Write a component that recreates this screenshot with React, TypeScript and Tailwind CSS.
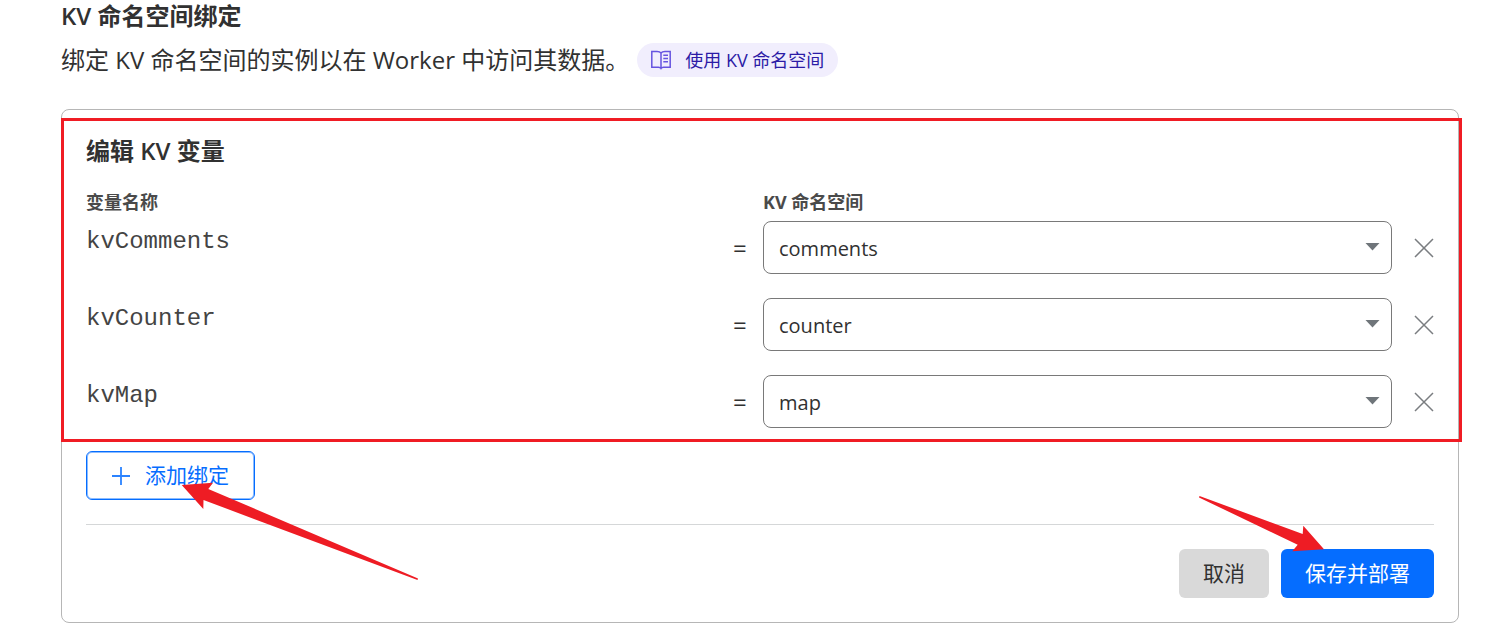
import { useState } from 'react'

const NAMESPACES = ['comments', 'counter', 'map']

const INITIAL_BINDINGS = [
    { name: 'kvComments', namespace: 'comments' },
    { name: 'kvCounter', namespace: 'counter' },
    { name: 'kvMap', namespace: 'map' },
]

function BookIcon() {
    return (
        <svg width="20" height="20" viewBox="0 0 20 20" fill="none" stroke="#6654e0" strokeWidth="1.5" aria-hidden="true">
            <path d="M10 3C9 1.700 7.500 1.500 6 1.500H.8v15.700H7.500c1.200 0 2 .3 2.500 1.200.5-.9 1.300-1.200 2.500-1.200h6.700V1.500H14c-1.500 0-3 .2-4 1.500v15" />
            <path d="M12.300 5.300H17M12.300 8.500H17M12.300 11.700H17" />
        </svg>
    )
}

function CloseIcon() {
    return (
        <svg width="20" height="20" viewBox="0 0 20 20" stroke="#7a7d80" strokeWidth="1.5" aria-hidden="true">
            <path d="M1 1l18 18M19 1L1 19" />
        </svg>
    )
}

function PlusIcon() {
    return (
        <svg width="18" height="18" viewBox="0 0 18 18" stroke="#2b83ff" strokeWidth="1.8" aria-hidden="true">
            <path d="M9 0v18M0 9h18" />
        </svg>
    )
}

export default function App() {
    const [bindings, setBindings] = useState(INITIAL_BINDINGS)

    const updateNamespace = (index: number, namespace: string) => {
        setBindings(bindings.map((b, i) => (i === index ? { ...b, namespace } : b)))
    }

    const removeBinding = (index: number) => {
        setBindings(bindings.filter((_, i) => i !== index))
    }

    const addBinding = () => {
        setBindings([...bindings, { name: 'kv' + (bindings.length + 1), namespace: NAMESPACES[0] }])
    }

    return (
        <main className="bg-white pl-[61px] pr-8 pb-1.5 text-[#313131] font-['Open_Sans','Noto_Sans_CJK_SC',sans-serif]">
            <h2 className="text-2xl leading-8 font-semibold">KV 命名空间绑定</h2>
            <div className="mt-[11px] flex items-center gap-2">
                <p className="text-2xl leading-[34px]">绑定 KV 命名空间的实例以在 Worker 中访问其数据。</p>
                <a href="#docs" className="flex h-[34px] items-center gap-3.5 rounded-full bg-[#f1eefd] px-3.5 text-lg text-[#2c1ba6]">
                    <BookIcon />
                    使用 KV 命名空间
                </a>
            </div>

            <form onSubmit={(e) => e.preventDefault()} className="mt-8 rounded-lg border border-[#b6b6b6] pt-2 pb-6">
                <div className="-ml-px -mr-1 border-[3px] border-[#f01c24] pt-3 pr-[25px] pb-[11px] pl-[22px]">
                    <h3 className="text-2xl leading-9 font-semibold">编辑 KV 变量</h3>
                    <div className="mt-5 mb-1.5 grid grid-cols-[1fr_12px_1fr_24px] gap-x-[18px] text-lg leading-[26px] font-bold text-[#4a4a4a]">
                        <span>变量名称</span>
                        <span className="col-start-3">KV 命名空间</span>
                    </div>
                    <div className="flex flex-col gap-6">
                        {bindings.map((binding, index) => (
                            <div key={binding.name} className="grid grid-cols-[1fr_12px_1fr_24px] items-center gap-x-[18px]">
                                <label
                                    htmlFor={binding.name}
                                    className="self-start text-2xl leading-[42px] text-[#444444] font-['Liberation_Mono',monospace]"
                                >
                                    {binding.name}
                                </label>
                                <span className="text-2xl leading-8">=</span>
                                <div className="relative">
                                    <select
                                        id={binding.name}
                                        value={binding.namespace}
                                        onChange={(e) => updateNamespace(index, e.target.value)}
                                        className="block h-[53px] w-full appearance-none rounded-lg border border-[#797979] bg-white px-[15px] pt-0.5 text-xl"
                                    >
                                        {NAMESPACES.map(ns => (
                                            <option key={ns} value={ns}>{ns}</option>
                                        ))}
                                    </select>
                                    <svg className="pointer-events-none absolute top-[22px] right-3" width="15" height="8" viewBox="0 0 15 8" aria-hidden="true">
                                        <path d="M.5 0h14l-7 7.500z" fill="#6f757a" />
                                    </svg>
                                </div>
                                <button type="button" aria-label="删除" onClick={() => removeBinding(index)} className="flex justify-end">
                                    <CloseIcon />
                                </button>
                            </div>
                        ))}
                    </div>
                </div>

                <div className="mx-6 mt-[9px]">
                    <div className="relative w-fit">
                        <button
                            type="button"
                            onClick={addBinding}
                            className="flex h-[49px] items-center gap-[15px] rounded-md border border-[#056dff] px-[25px] text-[21px] text-[#056dff] shadow-[inset_0_0_0_1px_#8cbcff]"
                        >
                            <PlusIcon />
                            添加绑定
                        </button>
                        <svg className="pointer-events-none absolute top-[31px] left-[95px]" width="238" height="100" viewBox="0 0 238 100" aria-hidden="true">
                            <path d="M.7 3L32 .7 27.300 7 237 96.500l-.5 1.500L22.500 18l-.2 9z" fill="#ee1c24" />
                        </svg>
                    </div>
                    <hr className="mt-6 border-[#d5d7d8]" />
                    <div className="mt-6 flex justify-end gap-3">
                        <button type="button" className="h-[49px] rounded-md bg-[#d9d9d9] px-6 text-[21px]">取消</button>
                        <div className="relative">
                            <button type="submit" className="h-[49px] rounded-md bg-[#056dff] px-6 text-[21px] text-white">保存并部署</button>
                            <svg className="pointer-events-none absolute top-[-54px] left-[-83px]" width="128" height="58" viewBox="0 0 128 58" aria-hidden="true">
                                <path d="M1.500 1L104.700 39l.6-8.300L126 54.300l-31.700 2 5.400-6.600L1 2.500z" fill="#ee1c24" />
                            </svg>
                        </div>
                    </div>
                </div>
            </form>
        </main>
    )
}
